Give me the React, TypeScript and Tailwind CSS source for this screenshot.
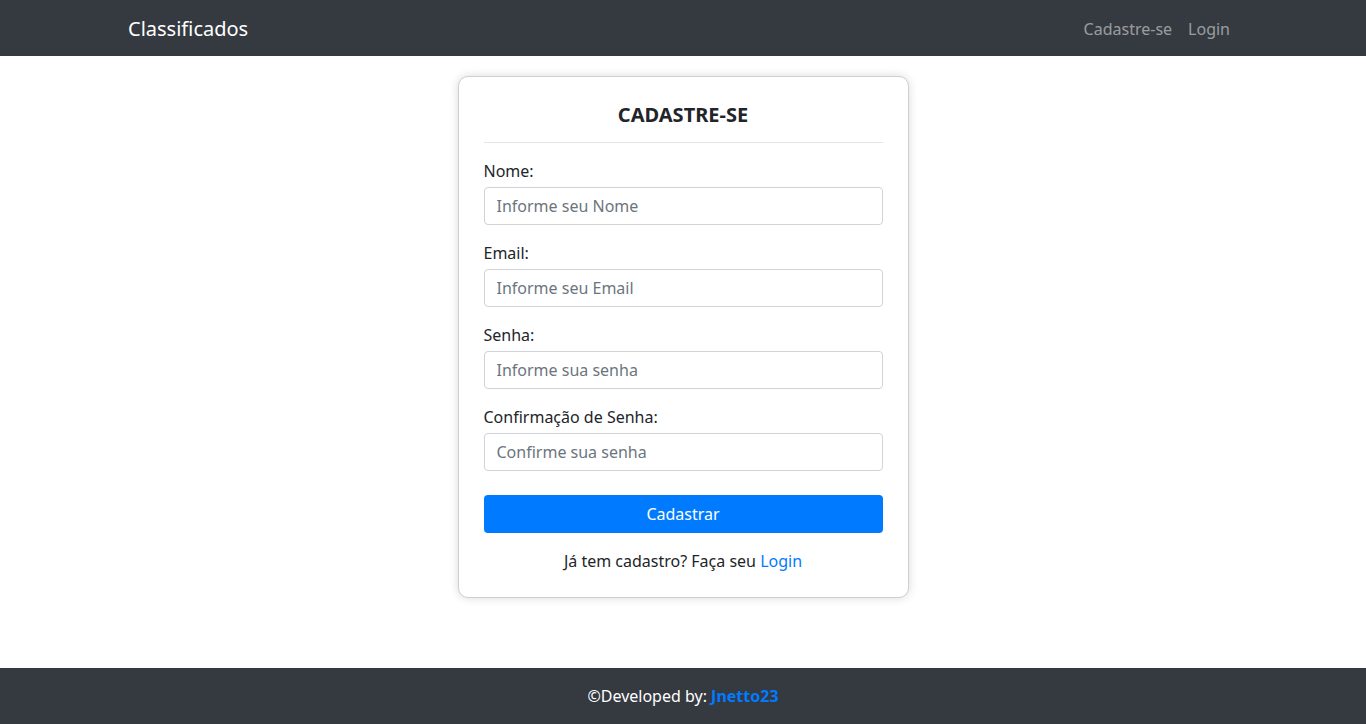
import React from "react";

const fields = [
  { label: "Nome:", placeholder: "Informe seu Nome", type: "text" },
  { label: "Email:", placeholder: "Informe seu Email", type: "email" },
  { label: "Senha:", placeholder: "Informe sua senha", type: "password" },
  { label: "Confirmação de Senha:", placeholder: "Confirme sua senha", type: "password" },
];

export default function App() {
  return (
    <div className="min-h-screen flex flex-col bg-white font-['Noto_Sans',sans-serif] text-[#212529]">
      {/* navbar */}
      <nav className="h-14 bg-[#343a40]">
        <div className="mx-auto w-[1140px] h-full px-[15px] flex items-center justify-between">
          <a href="#" className="pt-0.5 text-xl text-white">Classificados</a>
          <div className="flex items-center pt-0.5">
            <a href="#" className="px-2 text-base text-white/50">Cadastre-se</a>
            <a href="#" className="px-2 text-base text-white/50">Login</a>
          </div>
        </div>
      </nav>

      {/* conteudo */}
      <main className="flex-1 pt-5">
        <div className="mx-auto w-[451px] rounded-[10px] border border-[#cfcfcf] bg-white px-[25px] pt-6 pb-6 shadow-[0_0_10px_rgba(0,0,0,0.15)]">
          <h4 className="text-center text-xl leading-7 font-bold">CADASTRE-SE</h4>
          <hr className="mt-[13px] mb-4 border-[#e5e5e5]" />

          <form onSubmit={(e) => e.preventDefault()}>
            {fields.map((f) => (
              <div key={f.label} className="mb-4">
                <label className="block text-base leading-6 mb-1">{f.label}</label>
                <input
                  type={f.type}
                  placeholder={f.placeholder}
                  className="block w-full h-[38px] rounded border border-[#ced4da] px-3 text-base text-[#495057] placeholder:text-[#6c757d] outline-none"
                />
              </div>
            ))}
            <button
              type="submit"
              className="mt-2 w-full h-[38px] rounded bg-[#007bff] text-base text-white"
            >
              Cadastrar
            </button>
          </form>

          <p className="mt-4 text-center text-base leading-6">
            Já tem cadastro? Faça seu <a href="#" className="text-[#007bff]">Login</a>
          </p>
        </div>
      </main>

      {/* rodape */}
      <footer className="h-14 bg-[#343a40] flex items-center justify-center text-base text-white">
        ©Developed by:&nbsp;<a href="#" className="font-bold text-[#007bff]">Jnetto23</a>
      </footer>
    </div>
  );
}
